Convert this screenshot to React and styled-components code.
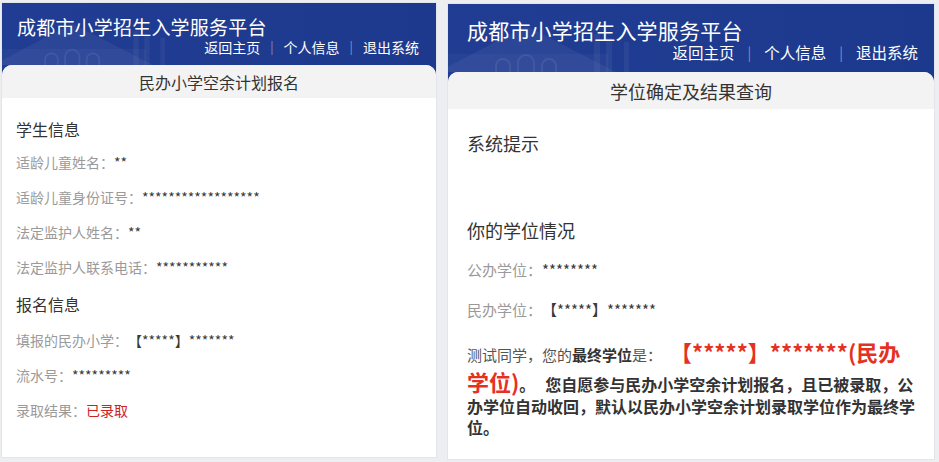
import React from 'react';
import styled, { createGlobalStyle } from 'styled-components';

const Global = createGlobalStyle`
  html, body {
    margin: 0;
    padding: 0;
    background: #eceef1;
  }
  body {
    font-family: "Noto Sans CJK SC", "Noto Sans", sans-serif;
    -webkit-font-smoothing: antialiased;
    text-spacing-trim: space-all;
  }
`;

const Page = styled.div`
  display: flex;
  align-items: flex-start;
  gap: 12px;
  padding: 3px 0 0 2px;
  height: 462px;
  box-sizing: border-box;
  overflow: hidden;
`;

const Panel = styled.section`
  width: ${(p) => p.$w}px;
  height: ${(p) => p.$h}px;
  margin-top: ${(p) => p.$top || 0}px;
  display: flex;
  flex-direction: column;
  background: linear-gradient(90deg, #213d93 0%, #1f3b90 60%, #1d398d 100%);
  box-shadow: 0 0 0 1px #e2e5ea;
  overflow: hidden;
`;

const Header = styled.header`
  position: relative;
  flex-shrink: 0;
  padding: ${(p) => p.$pad};
  color: #fff;
`;

const Skyline = styled.svg`
  position: absolute;
  left: 0;
  bottom: 0;
  width: ${(p) => p.$w}px;
  height: ${(p) => p.$h}px;
  pointer-events: none;
`;

const SiteTitle = styled.h1`
  position: relative;
  margin: 0;
  font-size: ${(p) => p.$size}px;
  line-height: ${(p) => p.$lh}px;
  font-weight: 400;
  letter-spacing: 0.2px;
`;

const Nav = styled.nav`
  position: relative;
  display: flex;
  justify-content: flex-end;
  align-items: center;
  margin-top: ${(p) => p.$mt}px;
  font-size: ${(p) => p.$size}px;
  line-height: ${(p) => p.$lh}px;
`;

const NavLink = styled.a`
  color: #fff;
  text-decoration: none;
  cursor: pointer;
`;

const NavSep = styled.span`
  color: rgba(255, 255, 255, 0.45);
  margin: 0 ${(p) => p.$gap}px;
  font-size: 0.9em;
`;

const Card = styled.div`
  flex: 1;
  min-height: 0;
  display: flex;
  flex-direction: column;
  background: #fff;
  border-radius: 10px 10px 0 0;
  overflow: hidden;
`;

const Band = styled.div`
  flex-shrink: 0;
  height: ${(p) => p.$h}px;
  display: flex;
  align-items: center;
  justify-content: center;
  background: #f3f3f3;
  color: #333;
  font-size: ${(p) => p.$size}px;
`;

const Body = styled.div`
  flex-shrink: 0;
  padding: ${(p) => p.$pad};
`;

const Heading = styled.h2`
  margin: 0;
  font-weight: 400;
  color: #333;
  font-size: ${(p) => p.$size}px;
  line-height: ${(p) => p.$lh}px;
`;

const Row = styled.div`
  font-size: ${(p) => p.$size}px;
  line-height: ${(p) => p.$lh}px;
  white-space: nowrap;
`;

const Label = styled.span`
  color: #9a9a9a;
`;

const Value = styled.span`
  color: ${(p) => (p.$accent ? '#cc2222' : '#3a3a3a')};
`;

const TipBox = styled.div`
  height: ${(p) => p.$h}px;
`;

const Notice = styled.p`
  margin: ${(p) => p.$mt}px 0 0;
  font-size: 15px;
  line-height: 21px;
  color: #555;
`;

const Strong = styled.b`
  color: #333;
  font-weight: 700;
`;

const Result = styled.span`
  color: #e5311f;
  font-size: 22px;
  line-height: 30px;
  font-weight: 700;
  margin-left: 8px;
`;

const Remark = styled.span`
  color: #333;
  font-size: 16px;
  font-weight: 700;
`;

const Gap = styled.span`
  display: inline-block;
  width: ${(p) => p.$w}px;
`;

function Building({ w, h }) {
  return (
    <Skyline $w={w} $h={h} viewBox="0 0 220 60" preserveAspectRatio="xMinYMax meet" aria-hidden="true">
      <polygon points="-10,60 78,14 168,60" fill="rgba(255,255,255,0.05)" />
      <rect x="0" y="42" width="160" height="18" fill="rgba(255,255,255,0.03)" />
      <g fill="none" stroke="rgba(255,255,255,0.08)" strokeWidth="2">
        <path d="M48 60 v-6 a7 7 0 0 1 14 0 v6" />
        <path d="M70 60 v-9 a8 8 0 0 1 16 0 v9" />
        <path d="M94 60 v-6 a7 7 0 0 1 14 0 v6" />
      </g>
      <g fill="rgba(255,255,255,0.05)">
        <rect x="146" y="22" width="6" height="38" />
        <rect x="158" y="26" width="6" height="34" />
        <rect x="176" y="30" width="5" height="30" />
      </g>
    </Skyline>
  );
}

function TopBar({ cfg }) {
  return (
    <Header $pad={cfg.headPad}>
      <Building w={cfg.deco[0]} h={cfg.deco[1]} />
      <SiteTitle $size={cfg.titleSize} $lh={cfg.titleLh}>成都市小学招生入学服务平台</SiteTitle>
      <Nav $size={cfg.navSize} $lh={cfg.navLh} $mt={cfg.navMt}>
        <NavLink>返回主页</NavLink>
        <NavSep $gap={cfg.sepGap}>|</NavSep>
        <NavLink>个人信息</NavLink>
        <NavSep $gap={cfg.sepGap}>|</NavSep>
        <NavLink>退出系统</NavLink>
      </Nav>
    </Header>
  );
}

const small = {
  headPad: '12px 17px 8px 15px',
  titleSize: 19,
  titleLh: 23,
  navSize: 14,
  navLh: 20,
  navMt: -1,
  sepGap: 10,
  deco: [200, 54],
};

const large = {
  headPad: '13px 16px 9px 19px',
  titleSize: 21,
  titleLh: 26,
  navSize: 15.5,
  navLh: 22,
  navMt: -2,
  sepGap: 13,
  deco: [220, 60],
};

function EnrollPanel() {
  return (
    <Panel $w={434} $h={454}>
      <TopBar cfg={small} />
      <Card>
        <Band $h={33} $size={16}>民办小学空余计划报名</Band>
        <Body $pad="15px 14px">
          <Heading $size={16} $lh={32}>学生信息</Heading>
          <Row $size={14} $lh={35}><Label>适龄儿童姓名：</Label><Value>**</Value></Row>
          <Row $size={14} $lh={35}><Label>适龄儿童身份证号：</Label><Value>******************</Value></Row>
          <Row $size={14} $lh={35}><Label>法定监护人姓名：</Label><Value>**</Value></Row>
          <Row $size={14} $lh={35}><Label>法定监护人联系电话：</Label><Value>***********</Value></Row>
          <Heading $size={16} $lh={38}>报名信息</Heading>
          <Row $size={14} $lh={35}><Label>填报的民办小学：</Label><Value>【*****】*******</Value></Row>
          <Row $size={14} $lh={35}><Label>流水号：</Label><Value>*********</Value></Row>
          <Row $size={14} $lh={35}><Label>录取结果：</Label><Value $accent>已录取</Value></Row>
        </Body>
      </Card>
    </Panel>
  );
}

function ResultPanel() {
  return (
    <Panel $w={486} $h={455} $top={1}>
      <TopBar cfg={large} />
      <Card>
        <Band $h={37} $size={18}>学位确定及结果查询</Band>
        <Body $pad="14px 19px">
          <Heading $size={18} $lh={40}>系统提示</Heading>
          <TipBox $h={47} />
          <Heading $size={18} $lh={40}>你的学位情况</Heading>
          <Row $size={15} $lh={40}><Label>公办学位：</Label><Value>********</Value></Row>
          <Row $size={15} $lh={40}><Label>民办学位：</Label><Value>【*****】*******</Value></Row>
          <Notice $mt={6}>
            测试同学，您的<Strong>最终学位</Strong>是：
            <Result>【*****】*******(民办学位)</Result>
            <Remark>。<Gap $w={10} />您自愿参与民办小学空余计划报名，且已被录取，公办学位自动收回，默认以民办小学空余计划录取学位作为最终学位。</Remark>
          </Notice>
        </Body>
      </Card>
    </Panel>
  );
}

export default function App() {
  return (
    <>
      <Global />
      <Page>
        <EnrollPanel />
        <ResultPanel />
      </Page>
    </>
  );
}
